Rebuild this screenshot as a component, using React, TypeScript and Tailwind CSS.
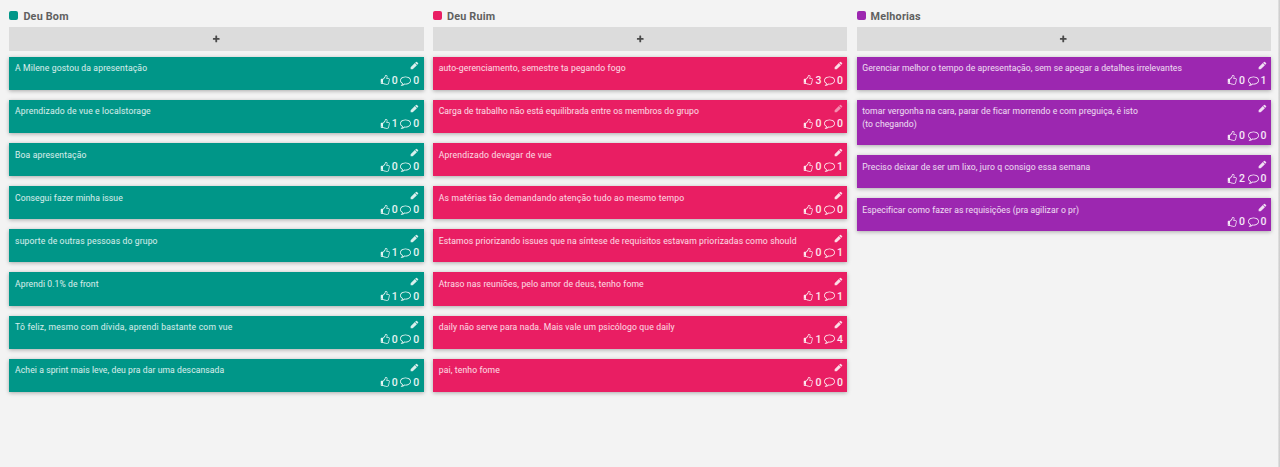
type Spacing = 'tight' | 'normal' | 'loose';
type Card = { text: string; likes: number; comments: number; spacing: Spacing; faded: boolean };
type Column = { title: string; color: string; cards: Card[] };

const c = (text: string, likes: number, comments: number, spacing: Spacing = 'normal', faded = false): Card => ({
  text,
  likes,
  comments,
  spacing,
  faded,
});

const tracking: Record<Spacing, string> = {
  tight: 'tracking-[0.08px]',
  normal: 'tracking-[0.135px]',
  loose: 'tracking-[0.2px]',
};

const columns: Column[] = [
  {
    title: 'Deu Bom',
    color: 'bg-[#009688]',
    cards: [
      c('A Milene gostou da apresentação', 0, 0),
      c('Aprendizado de vue e localstorage', 1, 0),
      c('Boa apresentação', 0, 0),
      c('Consegui fazer minha issue', 0, 0, 'tight'),
      c('suporte de outras pessoas do grupo', 1, 0),
      c('Aprendi 0.1% de front', 1, 0, 'tight'),
      c('Tô feliz, mesmo com dívida, aprendi bastante com vue', 0, 0, 'loose'),
      c('Achei a sprint mais leve, deu pra dar uma descansada', 0, 0, 'tight'),
    ],
  },
  {
    title: 'Deu Ruim',
    color: 'bg-[#e91e63]',
    cards: [
      c('auto-gerenciamento, semestre ta pegando fogo', 3, 0),
      c('Carga de trabalho não está equilibrada entre os membros do grupo', 0, 0, 'tight', true),
      c('Aprendizado devagar de vue', 0, 1, 'loose'),
      c('As matérias tão demandando atenção tudo ao mesmo tempo', 0, 0, 'loose'),
      c('Estamos priorizando issues que na síntese de requisitos estavam priorizadas como should', 0, 1),
      c('Atraso nas reuniões, pelo amor de deus, tenho fome', 1, 1),
      c('daily não serve para nada. Mais vale um psicólogo que daily', 1, 4),
      c('pai, tenho fome', 0, 0),
    ],
  },
  {
    title: 'Melhorias',
    color: 'bg-[#9c27b0]',
    cards: [
      c('Gerenciar melhor o tempo de apresentação, sem se apegar a detalhes irrelevantes', 0, 1, 'tight'),
      c('tomar vergonha na cara, parar de ficar morrendo e com preguiça, é isto\n(to chegando)', 0, 0, 'tight'),
      c('Preciso deixar de ser um lixo, juro q consigo essa semana', 2, 0),
      c('Especificar como fazer as requisições (pra agilizar o pr)', 0, 0, 'tight'),
    ],
  },
];

const paths = {
  thumb:
    'M384 1344q0-26-19-45t-45-19-45 19-19 45 19 45 45 19 45-19 19-45zm1152-576q0-51-39-89.5t-89-38.5h-352q0-58 48-159.5t48-160.5q0-98-32-145t-128-47q-26 26-38 85t-30.5 125.5-59.5 109.5q-22 23-77 91-4 5-23 30t-31.5 41-34.5 42.5-40 44-38.5 35.5-40 27-35.5 9h-32v640h32q13 0 31.5 3t33 6.5 38 11 35 11.5 35.5 12.5 29 10.5q211 73 342 73h121q192 0 192-167 0-26-5-56 30-16 47.5-52.5t17.5-73.5-18-69q53-50 53-119 0-25-10-55.5t-25-47.5q32-1 53.5-47t21.5-81zm128-1q0 89-49 163 9 33 9 69 0 77-38 144 3 21 3 43 0 101-60 178 1 139-85 219.5t-227 80.5h-129q-96 0-189.5-22.5t-216.5-65.5q-116-40-138-40h-288q-53 0-90.5-37.5t-37.5-90.5v-640q0-53 37.5-90.5t90.5-37.5h274q36-24 137-155 58-75 107-128 24-25 35.5-85.5t30.5-126.5 62-108q39-37 90-37 84 0 151 32.5t102 101.5 35 186q0 93-48 192h176q104 0 180 76t76 179z',
  comment:
    'M896 384q-204 0-381.5 69.5t-282 187.5-104.5 255q0 112 71.5 213.5t201.5 175.5l87 50-27 96q-24 91-70 172 152-63 275-171l43-38 57 6q69 8 130 8 204 0 381.5-69.5t282-187.5 104.5-255-104.5-255-282-187.5-381.5-69.5zm896 512q0 174-120 321.5t-326 233-450 85.5q-70 0-145-8-198 175-460 242-49 14-114 22h-5q-15 0-27-10.5t-16-27.5v-1q-3-4-.5-12t2-10 4.5-9.5l6-9 7-8.5 8-9q7-8 31-34.5t34.5-38 31-39.5 32.5-51 27-59 26-76q-157-89-247.5-220t-90.5-281q0-174 120-321.5t326-233 450-85.5 450 85.5 326 233 120 321.5z',
  pencil:
    'M960 416l416 416-832 832h-416v-416zm683 96q0 53-37 90l-166 166-416-416 166-165q36-38 90-38 53 0 91 38l235 234q37 39 37 91z',
  plus: 'M1600 736v192q0 40-28 68t-68 28h-416v416q0 40-28 68t-68 28h-192q-40 0-68-28t-28-68v-416h-416q-40 0-68-28t-28-68v-192q0-40 28-68t68-28h416v-416q0-40 28-68t68-28h192q40 0 68 28t28 68v416h416q40 0 68 28t28 68z',
};

function Icon({ name, className }: { name: keyof typeof paths; className: string }) {
  return (
    <svg viewBox="0 0 1792 1792" fill="currentColor" className={`shrink-0 ${className}`}>
      <path d={paths[name]} />
    </svg>
  );
}

function NoteCard({ card, color }: { card: Card; color: string }) {
  return (
    <article
      className={`flex flex-col pt-[5.4px] pr-[4.3px] pl-[5.7px] text-white shadow-[0_1px_4px_rgba(0,0,0,0.3)] ${color} ${
        card.text.includes('\n') ? 'h-[45.2px]' : 'h-[33.1px]'
      }`}
    >
      <div className="flex items-start justify-between">
        <p className={`text-[8.6px] leading-[12.2px] whitespace-pre text-white/85 ${tracking[card.spacing]}`}>
          {card.text}
        </p>
        <Icon name="pencil" className={`-mt-px size-[9px] ${card.faded ? 'opacity-50' : 'opacity-85'}`} />
      </div>
      <div className="mt-[0.5px] flex h-[12.2px] items-center justify-end text-[10.5px] leading-[12.2px] font-medium text-white/90">
        <Icon name="thumb" className="mr-[1.5px] mb-px size-[10.5px]" />
        <span>{card.likes}</span>
        <Icon name="comment" className="mr-[2px] mb-[2px] ml-[2.5px] size-[11px]" />
        <span>{card.comments}</span>
      </div>
    </article>
  );
}

export default function App() {
  return (
    <div className="flex h-[467px] w-[1280px] overflow-hidden bg-[#f3f3f3] font-[Roboto,sans-serif]">
      <main className="grid flex-1 grid-cols-3 items-start gap-[9.4px] pt-[9px] pr-[7.2px] pl-[9.4px]">
        {columns.map((column) => (
          <section key={column.title}>
            <header className="flex h-[14px] items-center">
              <span className={`-mt-px size-[9px] rounded-[2px] ${column.color}`} />
              <h2 className="mt-px ml-[5px] text-[10.8px] leading-[14px] font-bold tracking-[0.2px] text-[#606060]">
                {column.title}
              </h2>
            </header>
            <button className="mt-[4px] flex h-[23.5px] w-full items-center justify-center bg-[#dcdcdc] text-[#4a4a4a]">
              <Icon name="plus" className="size-[8.5px]" />
            </button>
            <div className="mt-[6.5px] flex flex-col gap-[10px]">
              {column.cards.map((card) => (
                <NoteCard key={card.text} card={card} color={column.color} />
              ))}
            </div>
          </section>
        ))}
      </main>
      <div className="w-[2px] bg-linear-to-r from-[#e6e6e6] to-[#c8c8c8]" />
    </div>
  );
}
